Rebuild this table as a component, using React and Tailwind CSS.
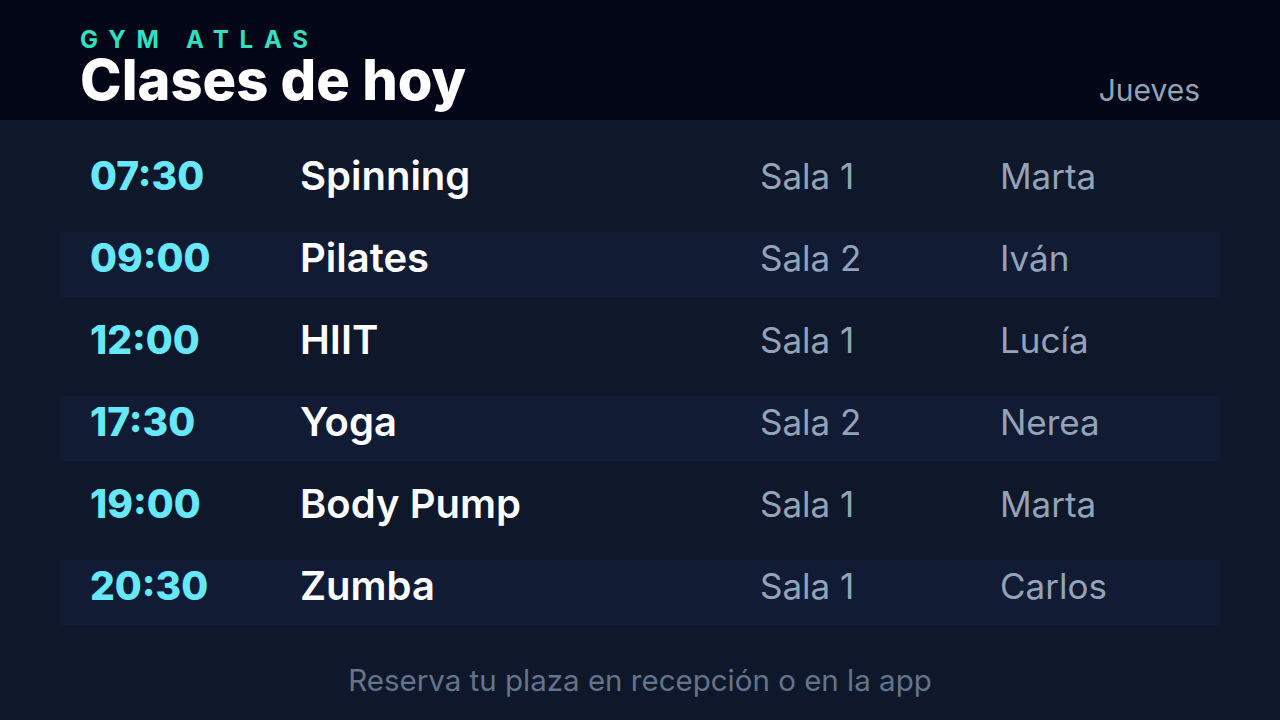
import React from "react";

const rows = [
  { t: "07:30", n: "Spinning", s: "Sala 1", i: "Marta" },
  { t: "09:00", n: "Pilates", s: "Sala 2", i: "Iván" },
  { t: "12:00", n: "HIIT", s: "Sala 1", i: "Lucía" },
  { t: "17:30", n: "Yoga", s: "Sala 2", i: "Nerea" },
  { t: "19:00", n: "Body Pump", s: "Sala 1", i: "Marta" },
  { t: "20:30", n: "Zumba", s: "Sala 1", i: "Carlos" },
];

export default function App() {
  return (
    <div className="w-[1280px] h-[720px] bg-[#0f172a] flex flex-col overflow-hidden" style={{ fontFamily: "Inter, 'Noto Sans', sans-serif" }}>
      <header className="h-[120px] bg-[#020617] flex items-end justify-between px-[80px] pb-[10px]">
        <div className="flex flex-col">
          <div className="text-[24px] leading-[22px] font-bold tracking-[0.45em] text-[#30e0c0] mb-[-1px]">GYM ATLAS</div>
          <div className="text-[56px] leading-[60px] font-extrabold text-white">Clases de hoy</div>
        </div>
        <div className="text-[30px] leading-[36px] text-[#94a3b8] mb-[2px]">Jueves</div>
      </header>
      <main className="flex flex-col gap-[17px] px-[60px] pt-[30px]">
        {rows.map((r, idx) => (
          <div key={idx} className={`h-[65px] flex items-center pb-[13px] ${idx % 2 === 1 ? "bg-[#111c34]" : ""}`}>
            <div className="w-[240px] pl-[30px] text-[39px] leading-[48px] font-extrabold text-[#67e8f9]">{r.t}</div>
            <div className="w-[460px] text-[40px] leading-[48px] font-semibold text-white">{r.n}</div>
            <div className="w-[240px] text-[35px] leading-[48px] text-[#94a3b8]">{r.s}</div>
            <div className="text-[35px] leading-[48px] text-[#94a3b8]">{r.i}</div>
          </div>
        ))}
      </main>
      <footer className="flex-1 flex items-center justify-center pt-[14px]">
        <div className="text-[29.5px] leading-[36px] text-[#64748b]">Reserva tu plaza en recepción o en la app</div>
      </footer>
    </div>
  );
}
